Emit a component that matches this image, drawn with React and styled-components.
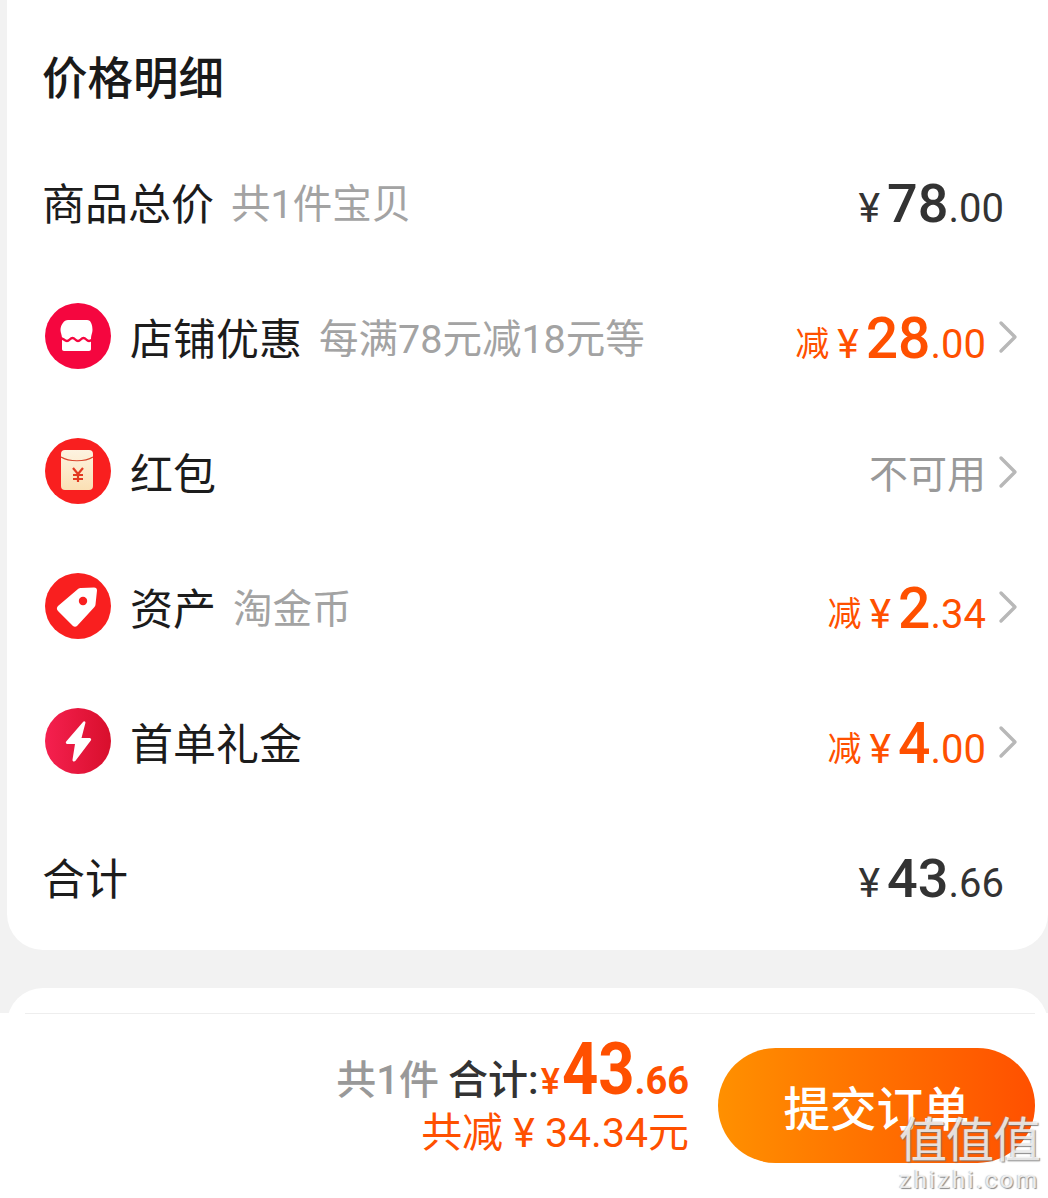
import React from "react";
import styled, { createGlobalStyle } from "styled-components";

const FONT = `"Roboto", "Noto Sans CJK SC", sans-serif`;

const GlobalStyle = createGlobalStyle`
  html, body {
    margin: 0;
    padding: 0;
    height: 100%;
    overflow: hidden;
    background: #f2f2f2;
    font-family: ${FONT};
  }
`;

const Page = styled.div`
  position: relative;
  width: 1048px;
  height: 1198px;
  overflow: hidden;
  background: #f2f2f2;
`;

const Card = styled.section`
  margin-left: 7px;
  height: 950px;
  box-sizing: border-box;
  padding: 0 30px 0 35px;
  background: #fff;
  border-radius: 0 0 36px 36px;
`;

const NextCard = styled.div`
  margin: 38px 0 0 7px;
  height: 300px;
  background: #fff;
  border-radius: 36px 36px 0 0;
`;

const Title = styled.h2`
  margin: 0;
  height: 133px;
  box-sizing: border-box;
  padding-top: 17px;
  display: flex;
  align-items: center;
  font-size: 45.500px;
  font-weight: 500;
  color: #1a1a1a;
`;

const Row = styled.div`
  height: 135px;
  display: flex;
  align-items: center;
`;

const IconWrap = styled.div`
  width: 66px;
  height: 66px;
  margin: 0 19px 0 3px;
  flex: none;
`;

const Label = styled.span`
  font-size: 43px;
  color: #1c1c1c;
`;

const Hint = styled.span`
  margin-left: 17px;
  font-size: 39.500px;
  color: #a3a3a3;
`;

const Right = styled.div`
  margin-left: auto;
  display: flex;
  align-items: baseline;
  padding-top: 6px;
  color: ${(p) => p.$color || "#333"};
  padding-right: ${(p) => p.$pad || 0}px;
`;

const Minus = styled.span`
  font-size: 34px;
  margin-right: 8px;
  transform: translateY(-2px);
`;

const Yen = styled.span`
  font-size: 41px;
  margin-right: 7px;
`;

const Whole = styled.span`
  font-size: ${(p) => (p.$big ? 57 : 54)}px;
  font-weight: 500;
`;

const Cents = styled.span`
  font-size: 40px;
`;

const Muted = styled.span`
  margin-left: auto;
  font-size: 39px;
  color: #999;
`;

const ChevronBox = styled.svg`
  width: 20px;
  height: 34px;
  margin: 3px 0 0 12px;
  flex: none;
`;

const Footer = styled.footer`
  position: absolute;
  left: 0;
  right: 0;
  bottom: 0;
  height: 185px;
  background: #fff;
  display: flex;
  justify-content: flex-end;
  align-items: center;
  padding-right: 13px;
`;

const FooterLine = styled.div`
  position: absolute;
  top: 0;
  left: 25px;
  right: 13px;
  height: 1px;
  background: #eee;
`;

const Summary = styled.div`
  display: flex;
  flex-direction: column;
  align-items: flex-end;
  margin: 0 29px 28px 0;
`;

const SummaryTop = styled.div`
  display: flex;
  align-items: baseline;
  height: 72px;
`;

const Count = styled.span`
  font-size: 40px;
  font-weight: 500;
  color: #999;
  margin-right: 9px;
`;

const Total = styled.span`
  font-size: 40px;
  font-weight: 500;
  color: #333;
  margin-right: 2px;
`;

const TotalYen = styled.span`
  font-size: 36px;
  font-weight: 500;
  color: #ff5000;
`;

const TotalWhole = styled.span`
  display: inline-block;
  margin-left: -8px;
  font-size: 72px;
  font-weight: 700;
  color: #ff5000;
  transform: scaleX(0.88);
  transform-origin: right center;
`;

const TotalCents = styled.span`
  font-size: 38px;
  font-weight: 700;
  color: #ff5000;
`;

const Saved = styled.div`
  margin-top: 10px;
  font-size: 41px;
  color: #ff5000;
  line-height: 48px;
`;

const Submit = styled.button`
  width: 317px;
  height: 115px;
  border: 0;
  padding: 0;
  border-radius: 58px;
  background: linear-gradient(90deg, #ff9000, #ff5000);
  color: #fff;
  font-family: ${FONT};
  font-size: 46.500px;
  font-weight: 500;
`;

const Watermark = styled.div`
  position: absolute;
  right: 8px;
  bottom: 4px;
  display: flex;
  flex-direction: column;
  align-items: center;
  color: rgba(255, 255, 255, 0.8);
  text-shadow: 1px 1px 1px rgba(110, 110, 110, 0.8), -1px 0 1px rgba(150, 150, 150, 0.5);
`;

const WatermarkMark = styled.span`
  font-size: 48px;
  line-height: 50px;
  letter-spacing: -1px;
`;

const WatermarkUrl = styled.span`
  font-size: 24px;
  line-height: 28px;
  letter-spacing: 2.500px;
`;

const Chevron = () => (
  <ChevronBox viewBox="0 0 20 34">
    <path d="M3 3l14 14L3 31" fill="none" stroke="#b8b8b8" strokeWidth="3.400" strokeLinecap="round" strokeLinejoin="round" />
  </ChevronBox>
);

const ShopIcon = () => (
  <svg viewBox="0 0 66 66" width="66" height="66">
    <circle cx="33" cy="33" r="33" fill="#f5063f" />
    <path d="M23 17h19c4 0 5.500 5 5.500 10 0 3-1.500 5-1.500 8v11c0 1.200-.8 2-2 2H19c-1.200 0-2-.8-2-2V35c0-3-1.500-5-1.500-8 0-5 3.500-10 7.500-10z" fill="#fff" />
    <path d="M15 35c3 0 4.500 3 7 3s3-3 5.500-3 3 3 5.500 3 3-3 5.500-3 3 3 5.500 3 4-3 6-3" fill="none" stroke="#f5063f" strokeWidth="2.400" />
  </svg>
);

const PacketIcon = () => (
  <svg viewBox="0 0 66 66" width="66" height="66">
    <defs>
      <linearGradient id="packet" x1="0" y1="0" x2="0" y2="1">
        <stop offset="0" stopColor="#fdf3e0" />
        <stop offset="1" stopColor="#fbe0b4" />
      </linearGradient>
    </defs>
    <circle cx="33" cy="33" r="33" fill="#f91f1f" />
    <rect x="16" y="12" width="32" height="40" rx="4" fill="url(#packet)" />
    <path d="M16 19c8 5 24 5 32 0" fill="none" stroke="#d8442c" strokeWidth="1.200" />
    <path d="M28 30l5 6 5-6M33 36v8M28 37h10M28 41h10" fill="none" stroke="#e23a22" strokeWidth="2.200" />
  </svg>
);

const TagIcon = () => (
  <svg viewBox="0 0 66 66" width="66" height="66">
    <circle cx="33" cy="33" r="33" fill="#f91f1f" />
    <path d="M13 33l20-17c1-1 2-1 3-1l13-.5c2 0 3 1 3 3l-1.500 14c0 1-.5 2-1.500 3L32 53c-1 1-3 1-4 0L13 38c-1.500-1.500-1.500-3.500 0-5z" fill="#fff" />
    <circle cx="38" cy="28" r="4.200" fill="#f91f1f" />
  </svg>
);

const BoltIcon = () => (
  <svg viewBox="0 0 66 66" width="66" height="66">
    <defs>
      <linearGradient id="bolt" x1="0" y1="0" x2="1" y2="0">
        <stop offset="0" stopColor="#f5204f" />
        <stop offset="1" stopColor="#d80f2c" />
      </linearGradient>
    </defs>
    <circle cx="33" cy="33" r="33" fill="url(#bolt)" />
    <path d="M38 14c1-1.500 2.800-.6 2.400 1L36.500 30h8c1.500 0 2.200 1.500 1.300 2.600L30.500 52.800c-1.200 1.500-3.300.6-3-1L30 36h-7.500c-1.500 0-2.200-1.500-1.300-2.600z" fill="#fff" />
  </svg>
);

const Amount = ({ whole, cents, color, pad, minus }) => (
  <Right $color={color} $pad={pad}>
    {minus && <Minus>减</Minus>}
    <Yen>¥</Yen>
    <Whole $big={minus}>{whole}</Whole>
    <Cents>{cents}</Cents>
  </Right>
);

export default function App() {
  return (
    <Page>
      <GlobalStyle />
      <Card>
        <Title>价格明细</Title>
        <Row>
          <Label>商品总价</Label>
          <Hint>共1件宝贝</Hint>
          <Amount whole="78" cents=".00" pad={14} />
        </Row>
        <Row>
          <IconWrap><ShopIcon /></IconWrap>
          <Label>店铺优惠</Label>
          <Hint>每满78元减18元等</Hint>
          <Amount whole="28" cents=".00" color="#ff5000" minus />
          <Chevron />
        </Row>
        <Row>
          <IconWrap><PacketIcon /></IconWrap>
          <Label>红包</Label>
          <Muted>不可用</Muted>
          <Chevron />
        </Row>
        <Row>
          <IconWrap><TagIcon /></IconWrap>
          <Label>资产</Label>
          <Hint>淘金币</Hint>
          <Amount whole="2" cents=".34" color="#ff5000" minus />
          <Chevron />
        </Row>
        <Row>
          <IconWrap><BoltIcon /></IconWrap>
          <Label>首单礼金</Label>
          <Amount whole="4" cents=".00" color="#ff5000" minus />
          <Chevron />
        </Row>
        <Row>
          <Label>合计</Label>
          <Amount whole="43" cents=".66" pad={14} />
        </Row>
      </Card>
      <NextCard />
      <Footer>
        <FooterLine />
        <Summary>
          <SummaryTop>
            <Count>共1件</Count>
            <Total>合计:</Total>
            <TotalYen>¥</TotalYen>
            <TotalWhole>43</TotalWhole>
            <TotalCents>.66</TotalCents>
          </SummaryTop>
          <Saved>共减 ¥ 34.34元</Saved>
        </Summary>
        <Submit>提交订单</Submit>
      </Footer>
      <Watermark>
        <WatermarkMark>值值值</WatermarkMark>
        <WatermarkUrl>zhizhi.com</WatermarkUrl>
      </Watermark>
    </Page>
  );
}
